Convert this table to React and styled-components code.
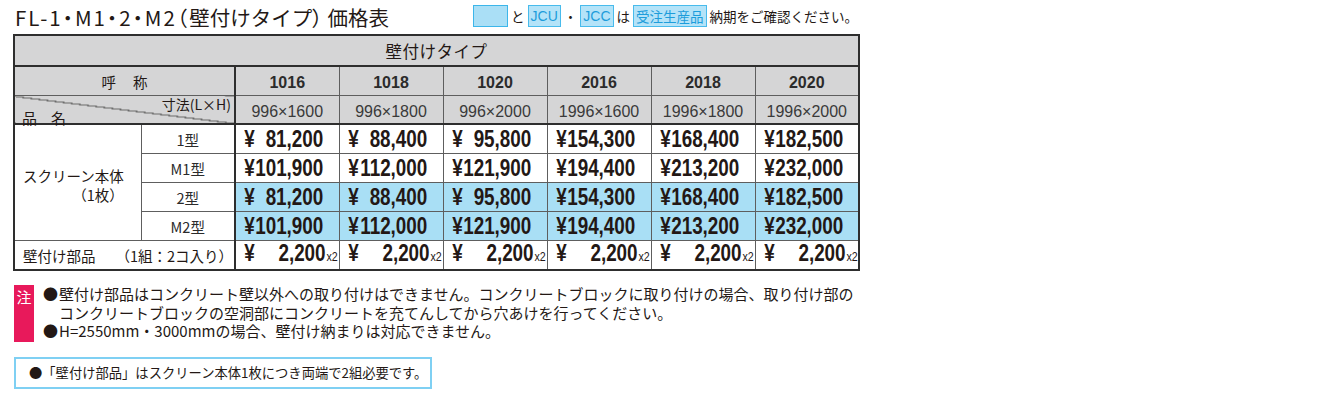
import React from 'react';
import styled, { createGlobalStyle } from 'styled-components';

const GlobalStyle = createGlobalStyle`
  body {
    margin: 0;
    background: #fff;
    color: #231815;
    font-family: "Noto Sans CJK JP", "Liberation Sans", sans-serif;
  }
`;

const Page = styled.div`
  width: 845px;
  padding: 0 0 0 13px;
`;

const TopBar = styled.div`
  display: flex;
  justify-content: space-between;
  align-items: center;
  height: 34px;
`;

const Title = styled.h1`
  margin: 0 0 0 2px;
  font-size: 20.5px;
  font-weight: 400;
  line-height: 34px;
  color: #231815;
  white-space: nowrap;
`;

/* latin part and brackets of the title are set proportionally */
const TitleLatin = styled.span`
  font-feature-settings: "palt";
  letter-spacing: ${p => p.$spacing || 0}px;
  margin-right: ${p => p.$after || 0}px;
`;

const Legend = styled.div`
  display: flex;
  align-items: center;
  gap: 3px;
  font-size: 13.5px;
  line-height: 20px;
  margin-bottom: 2px;
`;

const Swatch = styled.span`
  display: inline-block;
  width: 33px;
  height: 20px;
  background: #aadff6;
  border: 1px solid #3cb6ea;
`;

const Tag = styled.span`
  display: inline-block;
  padding: 0 2px;
  background: #b4e3f8;
  border: 1px solid #48bbec;
  color: #1d9ddb;
  font-family: ${p => (p.$latin ? '"Liberation Sans", sans-serif' : 'inherit')};
  font-size: ${p => (p.$latin ? '14px' : '13.5px')};
`;

const Table = styled.table`
  table-layout: fixed;
  border-collapse: collapse;
  width: 845px;
  border: 2.5px solid #2e2e2e;
`;

const Cell = styled.td`
  border: 1px solid #5e5e5e;
  padding: 0;
  height: ${p => p.$h || 28}px;
  text-align: center;
  vertical-align: middle;
  background: ${p => (p.$head ? '#d5d5d6' : p.$blue ? '#a9dff5' : '#fff')};
  border-left: ${p => (p.$split ? '2px solid #2e2e2e' : undefined)};
  border-top: ${p => (p.$thickTop ? '2px solid #2e2e2e' : undefined)};
  border-bottom: ${p => (p.$thickBottom ? '2px solid #2e2e2e' : undefined)};
`;

const GroupTitle = styled.span`
  font-size: 16.5px;
  letter-spacing: 0.5px;
`;

const Spaced = styled.span`
  font-size: 14.5px;
  letter-spacing: 17px;
  margin-right: -17px;
`;

const Code = styled.span`
  font-family: "Liberation Sans", sans-serif;
  font-weight: 700;
  font-size: 16px;
  color: #2b2b2b;
`;

const Dim = styled.span`
  font-family: "Liberation Sans", sans-serif;
  font-size: 16px;
  color: #3a3a3a;
`;

const DiagCell = styled(Cell)`
  background:
    linear-gradient(to top right, transparent calc(50% - 0.7px), #6a6a6a calc(50% - 0.5px), #6a6a6a calc(50% + 0.5px), transparent calc(50% + 0.7px)),
    #d5d5d6;
`;

const DiagText = styled.div`
  display: flex;
  flex-direction: column;
  justify-content: space-between;
  height: 25px;
  padding: 0 3px 0 7px;
`;

const DiagTop = styled.span`
  align-self: flex-end;
  font-size: 14px;
  line-height: 14px;
`;

const DiagBottom = styled.span`
  align-self: flex-start;
  font-size: 15px;
  line-height: 14px;
  letter-spacing: 14px;
`;

const BodyLabel = styled.div`
  display: inline-flex;
  flex-direction: column;
  font-size: 14.5px;
  line-height: 19px;
  margin: 4px 0 0 8px;
  text-align: left;
`;

const LabelRight = styled.span`
  align-self: flex-end;
`;

const TypeName = styled.span`
  font-size: 14.5px;
  color: #2b2b2b;
`;

const PartsLabel = styled.div`
  display: flex;
  justify-content: space-between;
  padding: 0 1px 0 8px;
  font-size: 14.5px;
`;

/* condensed bold figures: laid out at full width, then squeezed */
const Price = styled.div`
  display: flex;
  justify-content: space-between;
  align-items: baseline;
  box-sizing: border-box;
  width: 126px;
  margin-right: -23px;
  padding: 0 ${p => (p.$suffix ? 2 : 19.5)}px 0 10px;
  transform: scaleX(0.82);
  transform-origin: left center;
  font-family: "Liberation Sans", sans-serif;
  font-weight: 700;
  font-size: 23px;
  line-height: 24px;
  color: #231815;
`;

const Times = styled.span`
  font-weight: 400;
  font-size: 13px;
  margin-left: 1px;
`;

const Notes = styled.div`
  display: flex;
  gap: 9px;
  margin-top: 14px;
  margin-left: 1px;
`;

const NoteMark = styled.div`
  flex: none;
  width: 20px;
  height: 57px;
  background: #e8195b;
  color: #fff;
  font-size: 15px;
  line-height: 24px;
  text-align: center;
`;

const NoteList = styled.ul`
  list-style: none;
  margin: 0;
  padding: 0;
  font-size: 15px;
  line-height: 18.5px;
  white-space: nowrap;
  color: #231815;
`;

const NoteItem = styled.li`
  padding-left: 16px;
  text-indent: -16px;
`;

const Bullet = styled.span`
  display: inline-block;
  width: 16px;
  text-indent: 0;
`;

const Remark = styled.div`
  margin-top: 15px;
  margin-left: 1px;
  width: 401px;
  height: 28px;
  border: 2px solid #7fd0f3;
  font-size: 13.3px;
  line-height: 28px;
  padding-left: 13px;
  white-space: nowrap;
`;

const codes = ['1016', '1018', '1020', '2016', '2018', '2020'];
const dims = ['996×1600', '996×1800', '996×2000', '1996×1600', '1996×1800', '1996×2000'];

const rows = [
  { type: '1型', blue: false, prices: ['81,200', '88,400', '95,800', '154,300', '168,400', '182,500'] },
  { type: 'M1型', blue: false, prices: ['101,900', '112,000', '121,900', '194,400', '213,200', '232,000'] },
  { type: '2型', blue: true, prices: ['81,200', '88,400', '95,800', '154,300', '168,400', '182,500'] },
  { type: 'M2型', blue: true, prices: ['101,900', '112,000', '121,900', '194,400', '213,200', '232,000'] },
];

const App = () => {
  return (
    <Page>
      <GlobalStyle />
      <TopBar>
        <Title>
          <TitleLatin $spacing={2}>FL-1・M1・2・M2（</TitleLatin>
          壁付けタイプ
          <TitleLatin $after={5}>）</TitleLatin>
          価格表
        </Title>
        <Legend>
          <Swatch />
          <span>と</span>
          <Tag $latin>JCU</Tag>
          <span>・</span>
          <Tag $latin>JCC</Tag>
          <span>は</span>
          <Tag>受注生産品</Tag>
          <span>納期をご確認ください。</span>
        </Legend>
      </TopBar>

      <Table>
        <colgroup>
          <col style={{ width: 127 }} />
          <col style={{ width: 94 }} />
          {codes.map(c => <col key={c} style={{ width: 104 }} />)}
        </colgroup>
        <tbody>
          <tr>
            <Cell as="th" colSpan={8} $head $h={29} $thickBottom style={{ fontWeight: 400 }}>
              <GroupTitle>壁付けタイプ</GroupTitle>
            </Cell>
          </tr>
          <tr>
            <Cell as="th" colSpan={2} $head $h={28} style={{ fontWeight: 400 }}>
              <Spaced>呼称</Spaced>
            </Cell>
            {codes.map((c, i) => (
              <Cell key={c} $head $h={28} $split={i === 0}>
                <Code>{c}</Code>
              </Cell>
            ))}
          </tr>
          <tr>
            <DiagCell colSpan={2} $h={27}>
              <DiagText>
                <DiagTop>寸法(L×H)</DiagTop>
                <DiagBottom>品名</DiagBottom>
              </DiagText>
            </DiagCell>
            {dims.map((d, i) => (
              <Cell key={d} $head $h={27} $split={i === 0}>
                <Dim>{d}</Dim>
              </Cell>
            ))}
          </tr>
          {rows.map((r, ri) => (
            <tr key={r.type}>
              {ri === 0 && (
                <Cell rowSpan={4} $thickTop style={{ textAlign: 'left' }}>
                  <BodyLabel>
                    <span>スクリーン本体</span>
                    <LabelRight>（1枚）</LabelRight>
                  </BodyLabel>
                </Cell>
              )}
              <Cell $h={28} $thickTop={ri === 0}>
                <TypeName>{r.type}</TypeName>
              </Cell>
              {r.prices.map((p, i) => (
                <Cell key={i} $h={28} $blue={r.blue} $split={i === 0} $thickTop={ri === 0}>
                  <Price>
                    <span>¥</span>
                    <span>{p}</span>
                  </Price>
                </Cell>
              ))}
            </tr>
          ))}
          <tr>
            <Cell colSpan={2} $h={28}>
              <PartsLabel>
                <span>壁付け部品</span>
                <span>（1組：2コ入り）</span>
              </PartsLabel>
            </Cell>
            {codes.map((c, i) => (
              <Cell key={c} $h={28} $split={i === 0}>
                <Price $suffix>
                  <span>¥</span>
                  <span>
                    2,200<Times>x2</Times>
                  </span>
                </Price>
              </Cell>
            ))}
          </tr>
        </tbody>
      </Table>

      <Notes>
        <NoteMark>注</NoteMark>
        <NoteList>
          <NoteItem>
            <Bullet>●</Bullet>壁付け部品はコンクリート壁以外への取り付けはできません。コンクリートブロックに取り付けの場合、取り付け部の<br />
            コンクリートブロックの空洞部にコンクリートを充てんしてから穴あけを行ってください。
          </NoteItem>
          <NoteItem>
            <Bullet>●</Bullet>H=2550mm・3000mmの場合、壁付け納まりは対応できません。
          </NoteItem>
        </NoteList>
      </Notes>

      <Remark>●「壁付け部品」はスクリーン本体1枚につき両端で2組必要です。</Remark>
    </Page>
  );
};

export default App;
